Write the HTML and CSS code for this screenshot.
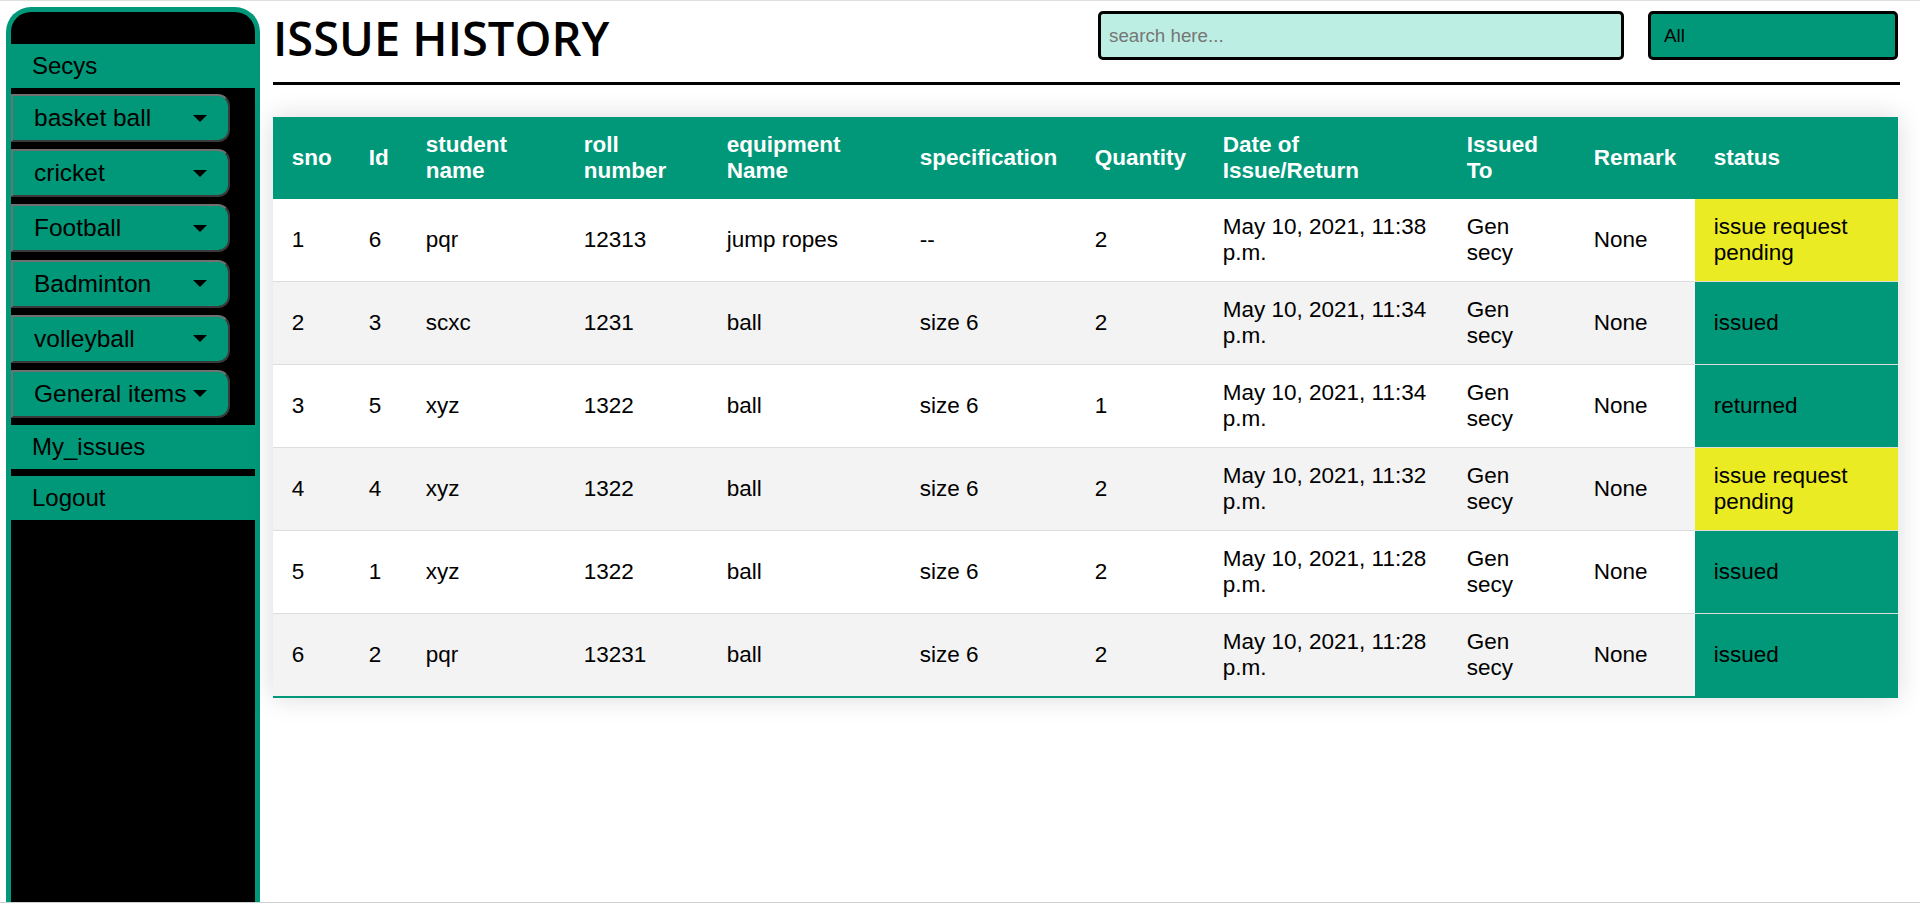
FILE: index.html
```html
<!DOCTYPE html>
<html lang="en">
<head>
<meta charset="utf-8">
<title>Issue History</title>
<link rel="stylesheet" href="styles.css">
</head>
<body>
<div class="app">
  <aside class="sidebar">
    <div class="side-top"></div>
    <a class="side-link" href="#">Secys</a>
    <div class="dropdowns">
      <button class="drop-btn">basket ball<span class="caret"></span></button>
      <button class="drop-btn">cricket<span class="caret"></span></button>
      <button class="drop-btn">Football<span class="caret"></span></button>
      <button class="drop-btn">Badminton<span class="caret"></span></button>
      <button class="drop-btn">volleyball<span class="caret"></span></button>
      <button class="drop-btn">General items<span class="caret"></span></button>
    </div>
    <a class="side-link" href="#">My_issues</a>
    <div class="side-gap"></div>
    <a class="side-link" href="#">Logout</a>
  </aside>
  <main class="content">
    <header class="page-head">
      <h1 class="title">ISSUE HISTORY</h1>
      <div class="controls">
        <input class="search" type="text" placeholder="search here...">
        <select class="filter"><option>All</option></select>
      </div>
    </header>
    <table class="styled-table">
      <thead>
        <tr>
          <th>sno</th><th>Id</th><th>student name</th><th>roll number</th><th>equipment Name</th><th>specification</th><th>Quantity</th><th>Date of Issue/Return</th><th>Issued To</th><th>Remark</th><th>status</th>
        </tr>
      </thead>
      <tbody>
        <tr><td>1</td><td>6</td><td>pqr</td><td>12313</td><td>jump ropes</td><td>--</td><td>2</td><td>May 10, 2021, 11:38 p.m.</td><td>Gen secy</td><td>None</td><td class="st-pending">issue request pending</td></tr>
        <tr><td>2</td><td>3</td><td>scxc</td><td>1231</td><td>ball</td><td>size 6</td><td>2</td><td>May 10, 2021, 11:34 p.m.</td><td>Gen secy</td><td>None</td><td class="st-ok">issued</td></tr>
        <tr><td>3</td><td>5</td><td>xyz</td><td>1322</td><td>ball</td><td>size 6</td><td>1</td><td>May 10, 2021, 11:34 p.m.</td><td>Gen secy</td><td>None</td><td class="st-ok">returned</td></tr>
        <tr><td>4</td><td>4</td><td>xyz</td><td>1322</td><td>ball</td><td>size 6</td><td>2</td><td>May 10, 2021, 11:32 p.m.</td><td>Gen secy</td><td>None</td><td class="st-pending">issue request pending</td></tr>
        <tr><td>5</td><td>1</td><td>xyz</td><td>1322</td><td>ball</td><td>size 6</td><td>2</td><td>May 10, 2021, 11:28 p.m.</td><td>Gen secy</td><td>None</td><td class="st-ok">issued</td></tr>
        <tr><td>6</td><td>2</td><td>pqr</td><td>13231</td><td>ball</td><td>size 6</td><td>2</td><td>May 10, 2021, 11:28 p.m.</td><td>Gen secy</td><td>None</td><td class="st-ok">issued</td></tr>
      </tbody>
    </table>
  </main>
</div>
</body>
</html>
```
FILE: styles.css
```css
* { box-sizing: border-box; }

html, body {
  margin: 0;
  padding: 0;
}

body {
  height: 100vh;
  overflow: hidden;
  border-top: 1px solid #dedede;
  border-bottom: 1px solid #cfcfcf;
  background: #fff;
  font-family: "Liberation Sans", Arial, sans-serif;
  color: #000;
}

.app {
  display: flex;
  height: 100%;
}

/* ---------- sidebar ---------- */
.sidebar {
  width: 254px;
  flex: none;
  margin: 6px 0 0 6px;
  background: #000;
  border: 5px solid #009879;
  border-bottom: none;
  border-radius: 25px 25px 0 0;
  display: flex;
  flex-direction: column;
}

.side-top { height: 32px; }

.side-link {
  display: block;
  height: 44px;
  line-height: 44px;
  padding-left: 21px;
  background: #009879;
  color: #000;
  font-size: 24px;
  text-decoration: none;
}

.side-gap { height: 7px; }

.dropdowns {
  display: flex;
  flex-direction: column;
  gap: 7.2px;
  padding: 6px 0 7px;
}

.drop-btn {
  width: 219px;
  height: 48px;
  padding: 0 21px 0 21px;
  background: #009879;
  border: 2px solid #707070;
  border-right-color: #3a3a3a;
  border-bottom-color: #3a3a3a;
  border-radius: 0 12px 12px 0;
  font-family: "Liberation Sans", Arial, sans-serif;
  font-size: 24.5px;
  color: #000;
  text-align: left;
  display: flex;
  align-items: center;
  justify-content: space-between;
}

.caret {
  flex: none;
  width: 0;
  height: 0;
  border-left: 7px solid transparent;
  border-right: 7px solid transparent;
  border-top: 7px solid #000;
}

/* ---------- main ---------- */
.content {
  flex: 1;
  min-width: 0;
  padding: 0 20px 0 13px;
}

.page-head {
  display: flex;
  justify-content: space-between;
  align-items: flex-start;
  height: 84px;
  border-bottom: 3px solid #000;
}

.title {
  margin: 5px 0 0;
  font-family: "Open Sans", sans-serif;
  font-weight: 600;
  font-size: 47px;
  line-height: 1.362;
}

.controls {
  display: flex;
  gap: 24px;
  margin-top: 10px;
  margin-right: 2px;
}

.search,
.filter {
  height: 49px;
  border: 3px solid #000;
  border-radius: 5px;
  font-family: "Liberation Sans", Arial, sans-serif;
  font-size: 18.75px;
  padding: 0 8px;
  outline: none;
}

.search {
  width: 526px;
  background: #bdeee3;
}

.search::placeholder { color: #767676; }

.filter {
  width: 250px;
  background: #009879;
  color: #000;
  padding-left: 13px;
  appearance: none;
  -webkit-appearance: none;
}

/* ---------- table ---------- */
.styled-table {
  width: calc(100% - 2px);
  margin-top: 32px;
  border-collapse: collapse;
  table-layout: fixed;
  font-size: 22.5px;
  box-shadow: 0 0 25px rgba(0, 0, 0, 0.15);
}

.styled-table th,
.styled-table td {
  padding: 15px 18.75px;
  text-align: left;
  vertical-align: middle;
}

.styled-table thead tr {
  background: #009879;
  color: #fff;
}

.styled-table th { font-weight: bold; }

.styled-table tbody tr { border-bottom: 1px solid #dddddd; }
.styled-table tbody tr:nth-of-type(even) { background: #f3f3f3; }
.styled-table tbody tr:last-of-type { border-bottom: 2px solid #009879; }

.styled-table th:nth-child(1) { width: 77px; }
.styled-table th:nth-child(2) { width: 57px; }
.styled-table th:nth-child(3) { width: 158px; }
.styled-table th:nth-child(4) { width: 143px; }
.styled-table th:nth-child(5) { width: 193px; }
.styled-table th:nth-child(6) { width: 175px; }
.styled-table th:nth-child(7) { width: 128px; }
.styled-table th:nth-child(8) { width: 244px; }
.styled-table th:nth-child(9) { width: 127px; }
.styled-table th:nth-child(10) { width: 120px; }
.styled-table th:nth-child(11) { width: 203px; }

.st-pending { background: #ebeb23; }
.st-ok { background: #009879; }
```
